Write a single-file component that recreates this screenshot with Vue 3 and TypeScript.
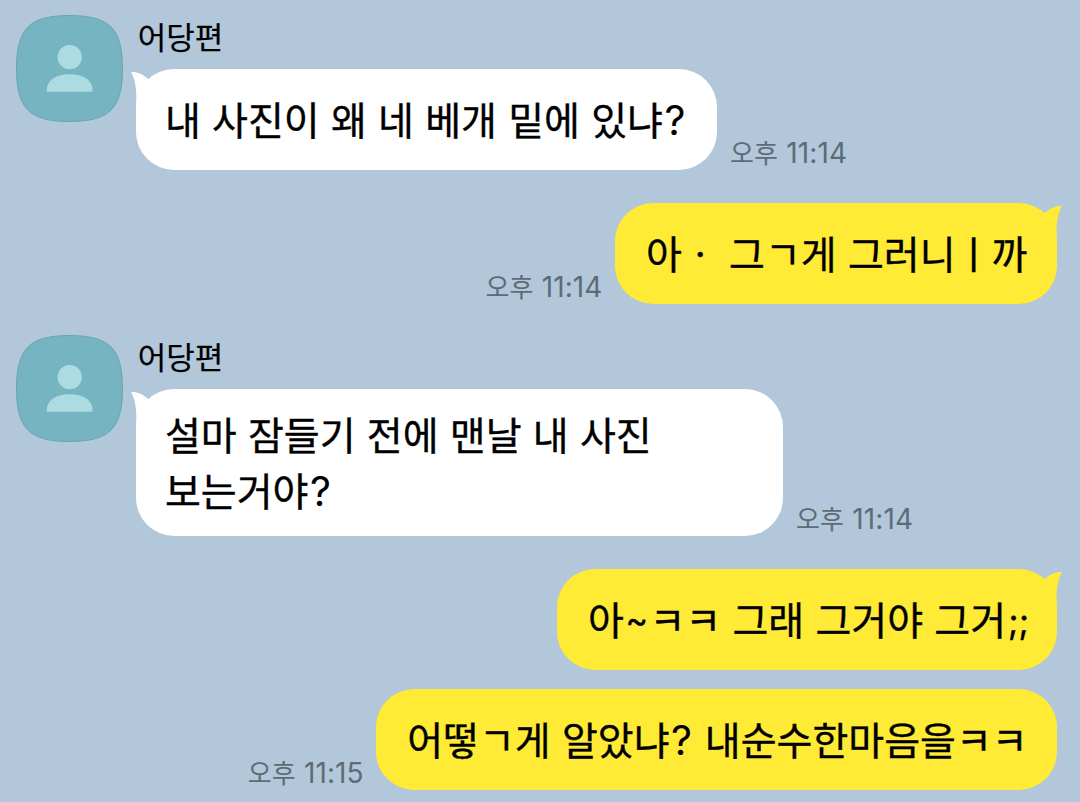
<script setup lang="ts">
type Kind = 'hangul' | 'digits' | 'question' | 'tilde' | 'semicolon'

interface Run {
  text: string
  kind: Kind
}

interface Message {
  id: number
  mine: boolean
  sender?: string
  lines: string[]
  time?: string
  tail: boolean
  size: string
}

const messages: Message[] = [
  { id: 1, mine: false, sender: '어당편', lines: ['내 사진이 왜 네 베개 밑에 있냐?'], time: '오후 11:14', tail: true, size: 'first' },
  { id: 2, mine: true, lines: ['아ㆍ 그ㄱ게 그러니ㅣ까'], time: '오후 11:14', tail: true, size: 'second' },
  { id: 3, mine: false, sender: '어당편', lines: ['설마 잠들기 전에 맨날 내 사진', '보는거야?'], time: '오후 11:14', tail: true, size: 'third' },
  { id: 4, mine: true, lines: ['아~ㅋㅋ 그래 그거야 그거;;'], tail: true, size: 'fourth' },
  { id: 5, mine: true, lines: ['어떻ㄱ게 알았냐? 내순수한마음을ㅋㅋ'], time: '오후 11:15', tail: false, size: 'fifth' },
]

function kindOf(part: string): Kind {
  if (/^[0-9:]/.test(part)) return 'digits'
  if (part.startsWith('?')) return 'question'
  if (part.startsWith('~')) return 'tilde'
  if (part.startsWith(';')) return 'semicolon'
  return 'hangul'
}

// Digits and punctuation are set in a different face and size than Hangul.
function runs(text: string): Run[] {
  const parts = text.match(/[0-9:]+|\?+|~+|;+|[^0-9:?~;]+/g) ?? []
  return parts.map((part) => ({ text: part, kind: kindOf(part) }))
}
</script>

<template>
  <main class="chat">
    <section
      v-for="m in messages"
      :key="m.id"
      class="message"
      :class="[m.mine ? 'mine' : 'theirs', m.size]"
    >
      <svg v-if="m.sender" class="avatar" viewBox="0 0 108 108" aria-hidden="true">
        <path
          class="avatar-bg"
          d="M.5 54C.5 13.5 13.5.5 54 .5S107.500 13.500 107.500 54 94.500 107.500 54 107.500 .5 94.500 .5 54Z"
        />
        <circle class="avatar-fg" cx="54.200" cy="42.500" r="12.300" />
        <path class="avatar-fg" d="M31.200 77.500V75.500C31.200 65.200 41.500 59.700 54.200 59.700S77.200 65.200 77.200 75.500V77.500Z" />
      </svg>
      <div class="body">
        <div v-if="m.sender" class="sender">{{ m.sender }}</div>
        <div class="row">
          <div class="bubble">
            <svg v-if="m.tail" class="tail" viewBox="0 0 20 38" aria-hidden="true">
              <path d="M0 .7C6.500 .8 12.500 3.300 17.700 8.600L19 20 8 37H5.400V28C5.400 18 4.200 8.500 0 .7Z" />
            </svg>
            <p v-for="line in m.lines" :key="line" class="line"><span
              v-for="(run, i) in runs(line)"
              :key="i"
              :class="run.kind"
            >{{ run.text }}</span></p>
          </div>
          <time v-if="m.time" class="time"><span
            v-for="(run, i) in runs(m.time)"
            :key="i"
            :class="run.kind"
          >{{ run.text }}</span></time>
        </div>
      </div>
    </section>
  </main>
</template>

<style>
body {
  margin: 0;
  background: #b2c7da;
}
</style>

<style scoped>
.chat {
  box-sizing: border-box;
  width: 1080px;
  height: 802px;
  padding: 14px 23.300px 0 16px;
  overflow: hidden;
  display: flex;
  flex-direction: column;
  background: #b2c7da;
  color: #000;
  font-family: "Noto Sans CJK KR", sans-serif;
}

.message {
  display: flex;
  align-items: flex-start;
  flex: none;
}

.avatar {
  flex: none;
  width: 107px;
  height: 107px;
  margin: 1px 13.300px 0 0;
}

.avatar-bg {
  fill: #75b4c0;
  stroke: #69a5b3;
  stroke-width: 1;
}

.avatar-fg {
  fill: #acdbe2;
}

.sender {
  height: 55px;
  padding-left: 1.500px;
  font-size: 31px;
  line-height: 44px;
  white-space: nowrap;
  -webkit-text-stroke: 0.2px #000;
}

.row {
  display: flex;
  align-items: flex-end;
}

.mine {
  justify-content: flex-end;
}

.mine .row {
  flex-direction: row-reverse;
}

.bubble {
  position: relative;
  box-sizing: border-box;
  flex: none;
  height: 101px;
  padding: 0 0 3px 28.700px;
  display: flex;
  flex-direction: column;
  justify-content: center;
  border-radius: 38px;
  background: #fff;
}

.mine .bubble {
  padding-left: 31px;
  background: #ffea35;
}

.tail {
  position: absolute;
  top: 2px;
  left: -5.400px;
  width: 20px;
  height: 38px;
  fill: #fff;
}

.mine .tail {
  left: auto;
  right: -5.400px;
  transform: scaleX(-1);
  fill: #ffea35;
}

.line {
  margin: 0;
  height: 56px;
  font-size: 39px;
  line-height: 56px;
  word-spacing: 2.500px;
  white-space: pre;
  -webkit-text-stroke: 0.35px #000;
}

.digits,
.question,
.tilde,
.semicolon {
  font-family: Inter, sans-serif;
  line-height: 1;
}

.digits {
  font-size: 28px;
}

.question {
  margin: 0 1.500px;
  font-size: 41px;
  -webkit-text-stroke: 0;
}

.tilde {
  margin: 0 1.500px;
  font-size: 34px;
  vertical-align: 3px;
}

.semicolon {
  margin-left: 2px;
  font-size: 35px;
  vertical-align: 1px;
}

.time {
  margin: 0 12.500px 2px 13.300px;
  height: 32px;
  color: #5d6b76;
  font-size: 26px;
  line-height: 32px;
  word-spacing: 2.500px;
  white-space: pre;
}

.time .digits {
  letter-spacing: 0.1px;
}

.first .bubble {
  width: 580.500px;
}

.second {
  margin-top: 33px;
}

.second .bubble {
  width: 441.700px;
}

.third {
  margin-top: 30px;
}

.third .bubble {
  width: 646.500px;
  height: 147px;
}

.fourth {
  margin-top: 33px;
}

.fourth .bubble {
  width: 499.700px;
}

.fifth {
  margin-top: 19px;
}

.fifth .bubble {
  width: 680.500px;
}
</style>
